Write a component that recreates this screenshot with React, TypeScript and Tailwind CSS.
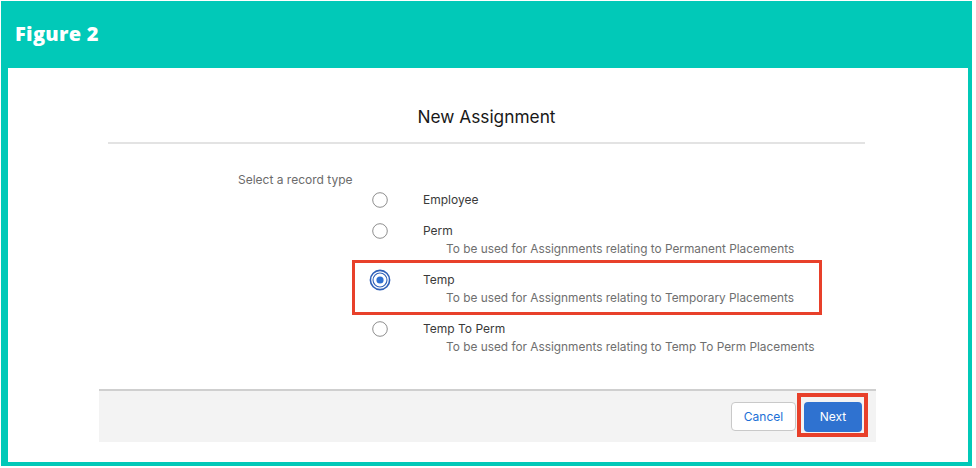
import React from "react";

type Opt = { label: string; desc?: string; checked?: boolean };

const options: Opt[] = [
  { label: "Employee" },
  { label: "Perm", desc: "To be used for Assignments relating to Permanent Placements" },
  { label: "Temp", desc: "To be used for Assignments relating to Temporary Placements", checked: true },
  { label: "Temp To Perm", desc: "To be used for Assignments relating to Temp To Perm Placements" },
];

function Radio({ checked }: { checked?: boolean }) {
  if (checked) {
    return (
      <svg width="22" height="22" viewBox="0 0 22 22" className="-m-[3px]">
        <circle cx="11" cy="11" r="9.6" fill="none" stroke="#2e5fb8" strokeWidth="1.6" />
        <circle cx="11" cy="11" r="7" fill="#fff" stroke="#2e5fb8" strokeWidth="1.1" />
        <circle cx="11" cy="11" r="3.6" fill="#2f6fd1" />
      </svg>
    );
  }
  return (
    <svg width="16" height="16" viewBox="0 0 16 16">
      <circle cx="8" cy="8" r="7.3" fill="#fff" stroke="#8e8e8e" strokeWidth="1" />
    </svg>
  );
}

export default function App() {
  return (
    <div className="w-[976px] h-[468px] bg-white pt-[1px] pl-[1px]" style={{ fontFamily: "Inter, 'Liberation Sans', sans-serif" }}>
      <div className="w-[971px] h-[465px] bg-[#01c9b8] flex flex-col">
        {/* header */}
        <div className="h-[67px] pl-[14px] flex items-center pb-[2px]">
          <span className="text-white text-[20px] font-extrabold tracking-[0.3px]" style={{ fontFamily: "'Open Sans', Lato, sans-serif" }}>
            Figure 2
          </span>
        </div>

        {/* body */}
        <div className="flex-1 ml-[7px] mr-[4px] mb-[4px] bg-white flex flex-col relative">
          <div className="ml-[100px] w-[757px] h-[76px] border-b-2 border-[#e3e3e3] flex items-center justify-center pt-[24px]">
            <span className="text-[17.3px] text-[#181818]">New Assignment</span>
          </div>

          <div className="pl-[230px] pt-[28px]">
            <div className="text-[12px] leading-[16px] text-[#6b6b6b]">Select a record type</div>
            <div className="ml-[134px] mt-[3px] flex flex-col">
              {options.map((o, i) => (
                <div key={o.label} className={i === 0 ? "" : "mt-[13px]"}>
                  <div className="flex items-center h-[18px]">
                    <div className="w-[16px] h-[16px] flex items-center justify-center">
                      <Radio checked={o.checked} />
                    </div>
                    <span className="ml-[35px] text-[12px] text-[#3a3a3a]">{o.label}</span>
                  </div>
                  {o.desc && (
                    <div className="ml-[74px] h-[18px] leading-[18px] text-[11.85px] text-[#6f6f6f]">{o.desc}</div>
                  )}
                </div>
              ))}
            </div>
          </div>

          {/* footer */}
          <div className="ml-[91px] mt-[33px] w-[777px] h-[53px] bg-[#f3f3f3] border-t-2 border-[#cfcfcf] flex items-center justify-end gap-[8px] pr-[14px]">
            <button className="w-[65px] h-[29px] rounded-[4px] border border-[#c9c9c9] bg-white text-[12px] text-[#1b6fd6]">
              Cancel
            </button>
            <button className="w-[58px] h-[30px] rounded-[4px] bg-[#2f72d0] text-[12px] text-white">Next</button>
          </div>

          {/* highlight boxes */}
          <div className="absolute left-[344px] top-[192px] w-[470px] h-[55px] border-[3px] border-[#e8402a]" />
          <div className="absolute left-[789px] top-[325px] w-[71px] h-[44px] border-[4px] border-[#e8402a]" />
        </div>
      </div>
    </div>
  );
}
